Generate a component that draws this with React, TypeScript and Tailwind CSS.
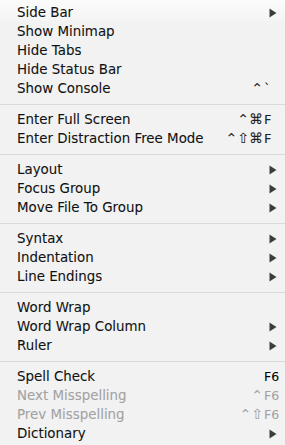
import React from "react";

type Item =
  | { sep: true }
  | { label: string; sub?: boolean; mods?: string; key?: string; disabled?: boolean; sep?: false };

const items: Item[] = [
  { label: "Side Bar", sub: true },
  { label: "Show Minimap" },
  { label: "Hide Tabs" },
  { label: "Hide Status Bar" },
  { label: "Show Console", mods: "⌃", key: "`" },
  { sep: true },
  { label: "Enter Full Screen", mods: "⌃⌘", key: "F" },
  { label: "Enter Distraction Free Mode", mods: "⌃⇧⌘", key: "F" },
  { sep: true },
  { label: "Layout", sub: true },
  { label: "Focus Group", sub: true },
  { label: "Move File To Group", sub: true },
  { sep: true },
  { label: "Syntax", sub: true },
  { label: "Indentation", sub: true },
  { label: "Line Endings", sub: true },
  { sep: true },
  { label: "Word Wrap" },
  { label: "Word Wrap Column", sub: true },
  { label: "Ruler", sub: true },
  { sep: true },
  { label: "Spell Check", key: "F6" },
  { label: "Next Misspelling", mods: "⌃", key: "F6", disabled: true },
  { label: "Prev Misspelling", mods: "⌃⇧", key: "F6", disabled: true },
  { label: "Dictionary", sub: true },
];

function Arrow() {
  return (
    <svg width="8" height="10" viewBox="0 0 8 10" className="block">
      <path d="M0.5 0.5 L7.5 5 L0.5 9.5 Z" fill="#3c3c3c" />
    </svg>
  );
}

export default function App() {
  return (
    <div
      className="w-[285px] h-[445px] overflow-hidden bg-[linear-gradient(to_bottom,#fbfbfb_0px,#f7f7f7_14px,#f2f2f2_24px,#f2f2f2_100%)] pt-[3px] text-[13.4px] text-[#111] [-webkit-text-stroke:0.08px_currentColor]"
      style={{ fontFamily: '"DejaVu Sans", "Noto Sans", sans-serif' }}
    >
      {items.map((it, i) =>
        it.sep ? (
          <div key={i} className="pt-[6px] pb-[5px]">
            <div className="h-px bg-[#dadada]" />
          </div>
        ) : (
          <div
            key={i}
            className={`flex h-[19px] items-center pl-[17px] leading-[19px] ${
              it.disabled ? "text-[#a3a3a3]" : "text-[#111]"
            }`}
          >
            <span className="flex-1 whitespace-nowrap">{it.label}</span>
            {it.sub ? (
              <span className="mr-[8px]">
                <Arrow />
              </span>
            ) : it.key ? (
              <span
                className={`mr-[7px] flex items-baseline whitespace-nowrap ${
                  it.disabled ? "text-[#a3a3a3]" : "text-[#222]"
                }`}
              >
                <span className="pr-[1px] text-right text-[14px]">{it.mods}</span>
                <span
                  className={`w-[14px] text-left ${
                    it.key === "F6" ? "text-[12.5px]" : "text-[13px]"
                  } ${it.key === "F6" && !it.disabled ? "text-black" : ""}`}
                >
                  {it.key}
                </span>
              </span>
            ) : null}
          </div>
        )
      )}
    </div>
  );
}
